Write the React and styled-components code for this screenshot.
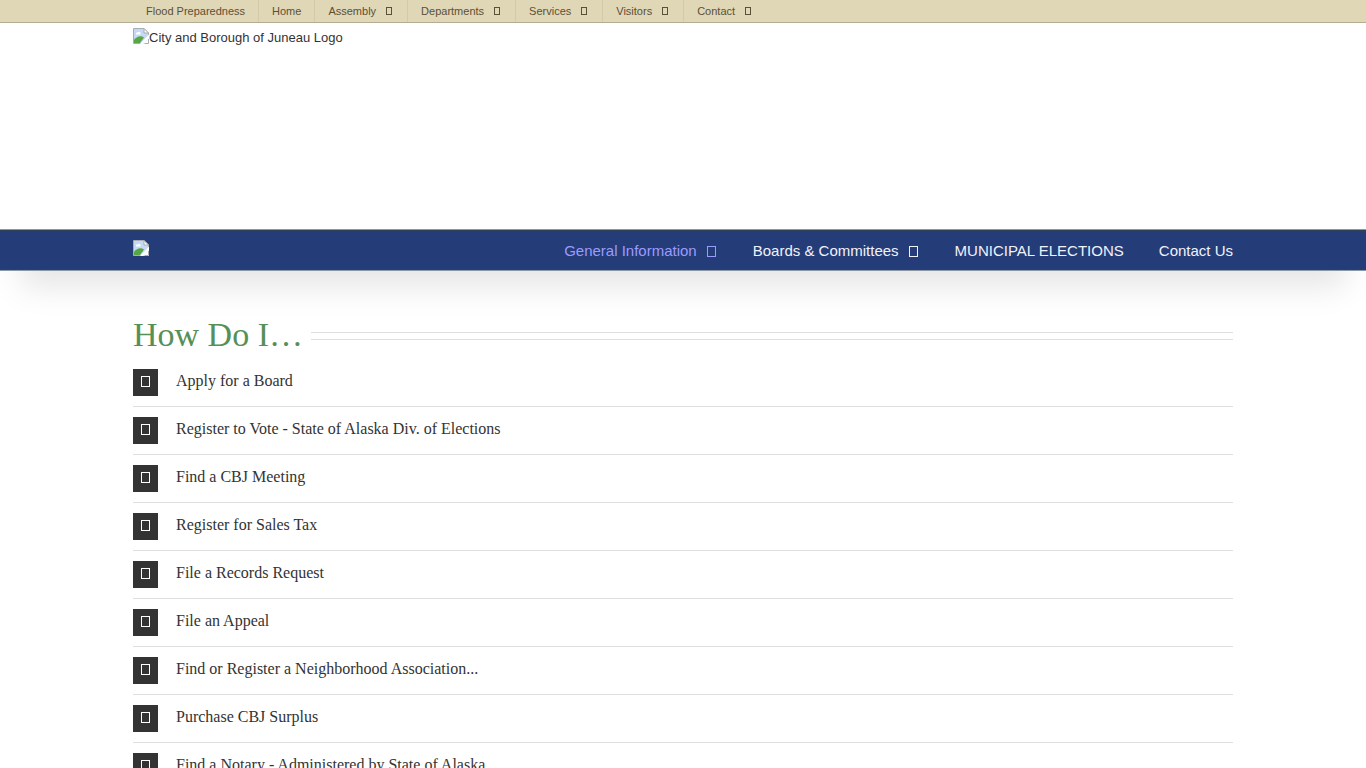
import React from "react";
import styled, { createGlobalStyle } from "styled-components";

const GlobalStyle = createGlobalStyle`
  *, *::before, *::after { box-sizing: border-box; }
  body {
    margin: 0;
    background: #fff;
    color: #333;
    font: 13px/20px "Liberation Sans", Arial, sans-serif;
  }
`;

const Container = styled.div`
  max-width: 1100px;
  margin: 0 auto;
`;

const Header = styled.header`
  box-shadow: 0 36px 30px -20px rgba(0, 0, 0, 0.1);
`;

const TopBar = styled.div`
  background: #e0d7b7;
  border-bottom: 1px solid #b4ad96;
`;

const TopNav = styled(Container).attrs({ as: "nav" })`
  display: flex;
  height: 22px;
`;

const TopLink = styled.a`
  display: flex;
  align-items: center;
  gap: 10px;
  padding: 0 13px;
  border-right: 1px solid #d2caab;
  color: #5b5035;
  font-size: 11px;
  text-decoration: none;
  &:last-child { border-right: 0; }
`;

const sizes = {
  small: ["6px", "8px"],
  medium: ["9px", "11px"],
};

const Glyph = styled.span`
  display: block;
  flex: none;
  width: ${(p) => sizes[p.$size][0]};
  height: ${(p) => sizes[p.$size][1]};
  border: 1px solid currentColor;
  a > & { margin-right: 2px; }
`;

const Banner = styled(Container)`
  height: 206px;
  padding-top: 5px;
`;

const LogoLink = styled.a`
  display: flex;
  color: #333;
  text-decoration: none;
`;

const MainBar = styled.div`
  background: #243c78;
  border-top: 1px solid #8b98a3;
  border-bottom: 1px solid #8b98a3;
  box-shadow: inset 0 1px #2d4258, inset 0 -1px #2d4258;
`;

const MainInner = styled(Container)`
  display: flex;
  justify-content: space-between;
  align-items: center;
  height: 40px;
`;

const StickyLogo = styled.a`
  display: flex;
  padding-bottom: 4px;
`;

const MainNav = styled.nav`
  display: flex;
  gap: 35px;
  padding-top: 2px;
`;

const MainLink = styled.a`
  display: flex;
  align-items: center;
  gap: 10px;
  color: ${(p) => (p.$active ? "#9b9bff" : "#f0f2fa")};
  font-size: 15px;
  text-decoration: none;
`;

const Content = styled(Container).attrs({ as: "main" })`
  padding: 44px 0 40px;
`;

const TitleRow = styled.div`
  display: flex;
  align-items: center;
  gap: 8px;
`;

const Title = styled.h1`
  margin: 0;
  color: #569058;
  font: 400 34px/40px "Liberation Serif", "Times New Roman", serif;
`;

const DoubleRule = styled.div`
  flex: 1;
  height: 8px;
  margin-top: 2px;
  border: solid #e0dede;
  border-width: 1px 0;
`;

const Questions = styled.div`
  margin-top: 4px;
`;

const Question = styled.button`
  display: flex;
  align-items: flex-start;
  gap: 18px;
  width: 100%;
  padding: 10px 0;
  border: 0;
  border-bottom: 1px solid #e0dede;
  background: none;
  color: #333;
  font: 16px/23px "Liberation Serif", "Times New Roman", serif;
  text-align: left;
  cursor: pointer;
`;

const IconBox = styled.span`
  display: flex;
  align-items: center;
  justify-content: center;
  width: 25px;
  height: 27px;
  padding-bottom: 2px;
  background: #333;
  color: #fff;
`;

function BrokenImage() {
  return (
    <svg width="16" height="16" viewBox="0 0 16 16" aria-hidden="true">
      <path d="M0.5 15.500V0.500H11L15.500 5V15.500Z" fill="#c5d8f5" stroke="#a9acb0" />
      <path d="M11 0.500V5H15.500Z" fill="#fff" stroke="#a9acb0" />
      <path d="M3 6.500C2.500 5 4 4 5 4.500C6 3 8 4 7.500 6.500Z" fill="#fff" />
      <path d="M1 15V12C4 8 8 7.500 11 9.500L7 15Z" fill="#58a544" />
      <path d="M7 16L16 6.500V9.500L10 16Z" fill="#fff" />
      <path d="M10 16L16 9.500V16Z" fill="#fff" />
      <path d="M11.500 15.500H15.500V11" fill="none" stroke="#a9acb0" />
    </svg>
  );
}

const topLinks = [
  ["Flood Preparedness", false],
  ["Home", false],
  ["Assembly", true],
  ["Departments", true],
  ["Services", true],
  ["Visitors", true],
  ["Contact", true],
];

const mainLinks = [
  ["General Information", true],
  ["Boards & Committees", true],
  ["MUNICIPAL ELECTIONS", false],
  ["Contact Us", false],
];

const questions = [
  "Apply for a Board",
  "Register to Vote - State of Alaska Div. of Elections",
  "Find a CBJ Meeting",
  "Register for Sales Tax",
  "File a Records Request",
  "File an Appeal",
  "Find or Register a Neighborhood Association...",
  "Purchase CBJ Surplus",
  "Find a Notary - Administered by State of Alaska",
];

export default function App() {
  return (
    <>
      <GlobalStyle />
      <Header>
        <TopBar>
          <TopNav aria-label="Secondary">
            {topLinks.map(([label, menu]) => (
              <TopLink href="#" key={label}>
                {label}
                {menu && <Glyph $size="small" />}
              </TopLink>
            ))}
          </TopNav>
        </TopBar>
        <Banner>
          <LogoLink href="#">
            <BrokenImage />
            City and Borough of Juneau Logo
          </LogoLink>
        </Banner>
        <MainBar>
          <MainInner>
            <StickyLogo href="#" aria-label="Home">
              <BrokenImage />
            </StickyLogo>
            <MainNav aria-label="Main">
              {mainLinks.map(([label, menu], i) => (
                <MainLink href="#" key={label} $active={i === 0}>
                  {label}
                  {menu && <Glyph $size="medium" />}
                </MainLink>
              ))}
            </MainNav>
          </MainInner>
        </MainBar>
      </Header>
      <Content>
        <TitleRow>
          <Title>How Do I…</Title>
          <DoubleRule />
        </TitleRow>
        <Questions>
          {questions.map((q) => (
            <Question type="button" key={q}>
              <IconBox>
                <Glyph $size="medium" />
              </IconBox>
              {q}
            </Question>
          ))}
        </Questions>
      </Content>
    </>
  );
}
